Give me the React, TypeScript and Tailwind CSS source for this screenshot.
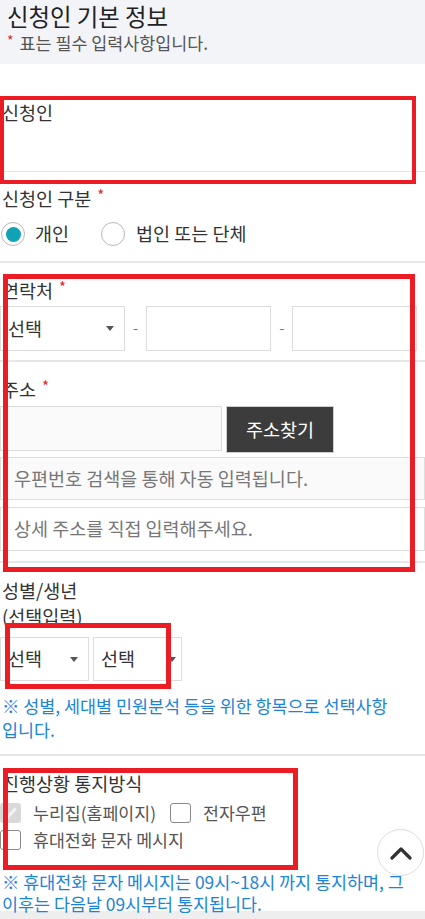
import React from 'react';

const FONT = "font-['Noto_Sans_CJK_KR','Noto_Sans',sans-serif]";

function Req() {
  return <span className="ml-[6px] align-top text-[15px] leading-[18px] text-[#e3262b]">*</span>;
}

function Label({ children, req = false }: { children: React.ReactNode; req?: boolean }) {
  return (
    <div className="h-[24px] pl-[2px] text-[18.5px] leading-[24px] text-[#333]">
      {children}
      {req && <Req />}
    </div>
  );
}

function Arrow() {
  return (
    <svg width="8" height="5" viewBox="0 0 8 5" className="shrink-0">
      <path d="M0 0 L8 0 L4 5 Z" fill="#555" />
    </svg>
  );
}

function Select({ w, arrowPad = 10 }: { w: string; arrowPad?: number }) {
  return (
    <div
      className={`${w} flex h-full items-center justify-between border border-[#dcdcdc] bg-white pl-[7px] text-[18.5px] text-[#333]`}
      style={{ paddingRight: arrowPad }}
    >
      <span>선택</span>
      <Arrow />
    </div>
  );
}

function Box({ checked = false, className = '' }: { checked?: boolean; className?: string }) {
  if (checked) {
    return (
      <span className={`flex h-[20px] w-[21px] shrink-0 items-center justify-center rounded-[3px] bg-[#d9d9d9] ${className}`}>
        <svg width="12" height="12" viewBox="0 0 12 12">
          <path d="M2 11 L10 2" stroke="#f2f2f2" strokeWidth="3" strokeLinecap="round" />
        </svg>
      </span>
    );
  }
  return <span className={`block h-[20px] w-[21px] shrink-0 rounded-[3px] border-[1.5px] border-[#8a8a8a] bg-white ${className}`} />;
}

export default function App() {
  return (
    <div className={`relative h-[919px] w-[425px] overflow-hidden bg-white ${FONT}`}>
      {/* header */}
      <div className="h-[64px] bg-[#f3f4f8] px-[7px] pt-[1px]">
        <div className="h-[30px] text-[23.4px] leading-[30px] text-[#222]">신청인 기본 정보</div>
        <div className="mt-[1px] h-[22px] text-[17.4px] leading-[22px] text-[#555]">
          <span className="mr-[6px] align-top text-[14px] leading-[16px] text-[#e3262b]">*</span>
          표는 필수 입력사항입니다.
        </div>
      </div>

      {/* 신청인 */}
      <div className="border-b border-[#e4e4e4] pt-[36px]">
        <Label>신청인</Label>
        <div className="h-[47px]" />
      </div>

      {/* 신청인 구분 */}
      <div className="border-b-2 border-[#e6e6e6] pt-[14px] pb-[15px]">
        <Label req>신청인 구분</Label>
        <div className="mt-[12px] flex h-[24px] items-center text-[18.5px] text-[#333]">
          <span className="ml-[1px] flex h-[24px] w-[24px] items-center justify-center rounded-full border-[1.5px] border-[#b8b8b8] bg-white">
            <span className="h-[15px] w-[15px] rounded-full bg-[#10a3b6]" />
          </span>
          <span className="ml-[10px]">개인</span>
          <span className="ml-[32px] h-[24px] w-[24px] rounded-full border-[1.5px] border-[#b8b8b8] bg-white" />
          <span className="ml-[11px]">법인 또는 단체</span>
        </div>
      </div>

      {/* 연락처 */}
      <div className="border-b-2 border-[#e6e6e6] pt-[15px] pb-[9px]">
        <Label req>연락처</Label>
        <div className="mt-[4px] flex h-[45px] items-center">
          <Select w="w-[125px]" />
          <span className="mx-[8px] text-[15px] text-[#777]">-</span>
          <div className="h-full w-[125px] border border-[#dcdcdc] bg-white" />
          <span className="mx-[8px] text-[15px] text-[#777]">-</span>
          <div className="h-full w-[125px] border border-[#dcdcdc] bg-white" />
        </div>
      </div>

      {/* 주소 */}
      <div className="border-b-2 border-[#e6e6e6] pt-[15px] pb-[10px]">
        <Label req>주소</Label>
        <div className="mt-[5px] flex h-[47px] items-start">
          <div className="h-[45px] w-[222px] border border-[#dcdcdc] bg-[#fafafa]" />
          <div className="ml-[4px] flex h-[47px] w-[108px] items-center justify-center border border-[#cfcfcf] bg-[#3c3c3c] text-[18.5px] text-white">
            주소찾기
          </div>
        </div>
        <div className="mt-[4px] flex h-[43px] items-center border border-[#dedede] bg-[#fafafa] pl-[13px] text-[18.5px] text-[#777]">
          우편번호 검색을 통해 자동 입력됩니다.
        </div>
        <div className="mt-[7px] flex h-[44px] items-center border border-[#dedede] bg-white pl-[13px] text-[18.5px] text-[#777]">
          상세 주소를 직접 입력해주세요.
        </div>
      </div>

      {/* 성별/생년 */}
      <div className="border-b-2 border-[#e6e6e6] pt-[15px] pb-[12px]">
        <Label>성별/생년</Label>
        <div className="mt-[2px] h-[24px] pl-[2px] text-[18.5px] leading-[24px] text-[#333]">(선택입력)</div>
        <div className="mt-[9px] flex h-[44px] gap-[4px]">
          <Select w="w-[89px]" />
          <Select w="w-[89px]" arrowPad={5} />
        </div>
        <p className="mt-[13px] pl-[2px] text-[17.4px] leading-[24px] text-[#1b84d8]">
          ※ 성별, 세대별 민원분석 등을 위한 항목으로 선택사항
          <br />
          입니다.
        </p>
      </div>

      {/* 진행상황 통지방식 */}
      <div className="h-[155px] pt-[15px]">
        <Label>진행상황 통지방식</Label>
        <div className="mt-[4px] flex h-[27px] items-center text-[17.3px] text-[#555]">
          <Box checked />
          <span className="ml-[12px]">누리집(홈페이지)</span>
          <Box className="ml-[14px]" />
          <span className="ml-[12px]">전자우편</span>
        </div>
        <div className="flex h-[27px] items-center text-[17.3px] text-[#555]">
          <Box />
          <span className="ml-[12px]">휴대전화 문자 메시지</span>
        </div>
        <p className="mt-[18px] pl-[2px] text-[17.4px] leading-[22px] text-[#1b84d8]">
          ※ 휴대전화 문자 메시지는 09시~18시 까지 통지하며, 그
          <br />
          이후는 다음날 09시부터 통지됩니다.
        </p>
      </div>
      <div className="h-[10px] bg-[#eeeeee]" />

      {/* scroll to top */}
      <button className="absolute left-[377px] top-[829px] flex h-[47px] w-[47px] items-center justify-center rounded-full border border-[#dddddd] bg-white/80">
        <svg width="22" height="14" viewBox="0 0 22 14">
          <polyline points="2,12 11,3 20,12" fill="none" stroke="#333" strokeWidth="3.2" strokeLinecap="round" strokeLinejoin="round" />
        </svg>
      </button>

      {/* annotation boxes */}
      <div className="pointer-events-none absolute left-0 top-[96px] h-[88px] w-[416px] border-[4px] border-[#ec1c24]" />
      <div className="pointer-events-none absolute left-[3px] top-[274px] h-[298px] w-[412px] border-[5px] border-[#ec1c24]" />
      <div className="pointer-events-none absolute left-[5px] top-[623px] h-[66px] w-[166px] border-[5px] border-[#ec1c24]" />
      <div className="pointer-events-none absolute left-[3px] top-[768px] h-[102px] w-[295px] border-[5px] border-[#ec1c24]" />
    </div>
  );
}
